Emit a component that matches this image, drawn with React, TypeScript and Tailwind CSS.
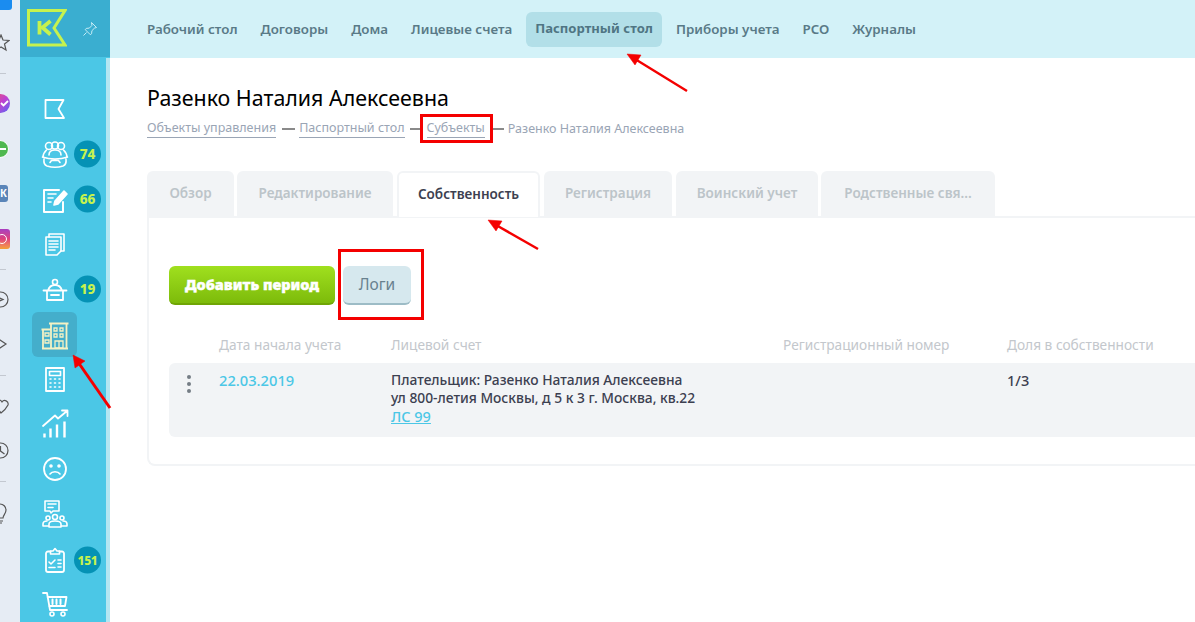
import React from 'react';

const font = "font-['Noto_Sans','Open_Sans',sans-serif]";

const navItems = ['Рабочий стол', 'Договоры', 'Дома', 'Лицевые счета', 'Паспортный стол', 'Приборы учета', 'РСО', 'Журналы'];
const tabs = [
  { label: 'Обзор', w: 'w-[87px] ml-0' },
  { label: 'Редактирование', w: 'w-[156px] ml-[3px]' },
  { label: 'Собственность', w: 'w-[143px] ml-[4px]', active: true },
  { label: 'Регистрация', w: 'w-[128px] ml-[4px]' },
  { label: 'Воинский учет', w: 'w-[142px] ml-[4px]' },
  { label: 'Родственные свя...', w: 'w-[174px] ml-[3px]' },
];

const Badge = ({ value }: { value: string }) => (
  <div
    className={`absolute left-[54px] top-[calc(50%-1px)] -translate-y-1/2 w-[27px] h-[27px] rounded-full bg-[#0592b5] text-[#c6f24e] font-extrabold flex items-center justify-center ${
      value.length > 2 ? 'text-[12px] tracking-tight' : 'text-[13.5px]'
    }`}
  >
    {value}
  </div>
);

const Icon = ({ children }: { children: React.ReactNode }) => (
  <svg width="30" height="30" viewBox="0 0 30 30" fill="none" stroke="#fff" strokeWidth="1.6" strokeLinejoin="round" strokeLinecap="round">
    {children}
  </svg>
);

const SideItem = ({ h, badge, children, active }: { h: string; badge?: string; children: React.ReactNode; active?: boolean }) => (
  <div className={`relative flex items-center w-[86px] pl-[12px] ${h}`}>
    <div className={`w-[45px] h-[45px] shrink-0 rounded-md flex items-center justify-center ${active ? 'bg-[#44aecb]' : ''}`}>{children}</div>
    {badge && <Badge value={badge} />}
  </div>
);

export default function App() {
  return (
    <div className={`relative flex w-[1195px] h-[622px] overflow-hidden bg-white ${font}`}>
      {/* browser side strip */}
      <div className="w-[20px] shrink-0 bg-[#e6ecf4] relative overflow-hidden">
        <div className="absolute left-[-6px] top-[-8px] w-[18px] h-[18px] rounded-[3px] bg-[#1a8cf0]" />
        <svg className="absolute left-[-7px] top-[34px]" width="17" height="18" viewBox="0 0 17 18" fill="none" stroke="#555" strokeWidth="1.2">
          <path d="M8 1l2 5 6 .5-4.500 3.500 1.500 6-5-3-5 3 1.500-6L0 6.500 6 6z" />
        </svg>
        <div className="absolute left-0 top-[73px] w-[6px] h-px bg-[#c3c8d0]" />
        <div className="absolute left-[-9px] top-[94px] w-[19px] h-[19px] rounded-full bg-gradient-to-br from-[#f0485f] via-[#c040d0] to-[#4a5cf5]" />
        <svg className="absolute left-0 top-[99px]" width="9" height="9" viewBox="0 0 9 9" fill="none" stroke="#fff" strokeWidth="1.800">
          <path d="M1 4l2.500 2.500L8 2" />
        </svg>
        <div className="absolute left-[-9px] top-[140px] w-[18px] h-[18px] rounded-full bg-[#4fb84f] border border-white" />
        <div className="absolute left-0 top-[148px] w-[6px] h-[2px] bg-white" />
        <div className="absolute left-[-6px] top-[185px] w-[14px] h-[17px] rounded-[3px] bg-[#5a85b8] text-white text-[10px] font-bold leading-[17px] text-right pr-[1px]">К</div>
        <div className="absolute left-[-4px] top-[229px] w-[14px] h-[20px] rounded-[3px] bg-gradient-to-b from-[#a83cc0] via-[#e0407a] to-[#f5a030]" />
        <div className="absolute left-[-3px] top-[234px] w-[10px] h-[10px] rounded-full border border-white" />
        <div className="absolute left-0 top-[269px] w-[6px] h-px bg-[#c3c8d0]" />
        <svg className="absolute left-[-8px] top-[291px]" width="17" height="17" viewBox="0 0 17 17" fill="none" stroke="#555" strokeWidth="1.200">
          <circle cx="8.500" cy="8.500" r="7.500" /><path d="M5 6l6 2.500-6 2.500" />
        </svg>
        <svg className="absolute left-[-4px] top-[337px]" width="12" height="14" viewBox="0 0 12 14" fill="none" stroke="#555" strokeWidth="1.200">
          <path d="M1 1l9 6-9 6" />
        </svg>
        <div className="absolute left-0 top-[375px] w-[6px] h-px bg-[#c3c8d0]" />
        <svg className="absolute left-[-6px] top-[397px]" width="15" height="18" viewBox="0 0 15 18" fill="none" stroke="#555" strokeWidth="1.200">
          <path d="M7 16L2 10C-1 5 5 0 8 5c2-3 7-1 6 3-1 2-3 5-7 8z" />
        </svg>
        <svg className="absolute left-[-8px] top-[442px]" width="17" height="17" viewBox="0 0 17 17" fill="none" stroke="#555" strokeWidth="1.200">
          <circle cx="8.500" cy="8.500" r="7.500" /><path d="M8.500 4v5l4 3" />
        </svg>
        <div className="absolute left-0 top-[481px] w-[6px] h-px bg-[#c3c8d0]" />
        <svg className="absolute left-[-7px] top-[503px]" width="15" height="22" viewBox="0 0 15 22" fill="none" stroke="#555" strokeWidth="1.200">
          <path d="M4 15c0-3-3-4-3-8a6 6 0 0 1 12 0c0 4-3 5-3 8zM4 18h6M5 20h4" />
        </svg>
      </div>

      {/* sidebar */}
      <div className="w-[90px] shrink-0 flex flex-col bg-[#4bc7e6] relative">
        <div className="h-[58px] bg-[#3aaed0] flex items-center relative">
          <svg className="ml-[7px] mt-[-1px]" width="40" height="38" viewBox="0 0 40 38" fill="none">
            <path d="M1.500 1.500H38L27 19l11 17H1.500z" stroke="#c6f24e" strokeWidth="3" />
            <path d="M12.500 12v13.500M23.500 12l-8 6.500 8 7" stroke="#c6f24e" strokeWidth="3.800" />
          </svg>
          <svg className="ml-[15px]" width="16" height="16" viewBox="0 0 16 16" fill="none" stroke="#d5f3f9" strokeWidth="0.9">
            <path d="M9.500 1.500l5 5-2 .6-2.600 2.600-.3 3-1.300 1-5-5 1-1.300 3-.3 2.600-2.600zM4.500 11.500l-3 3" />
          </svg>
        </div>
        <div className="absolute right-0 top-[58px] bottom-0 w-[4px] bg-[#b4e6f2]" />
        <div className="pt-[28px] flex flex-col">
          <SideItem h="h-[46px]">
            <Icon><path d="M5.500 7h18l-5 9 5.500 9H5.500z" strokeWidth="1.800" /></Icon>
          </SideItem>
          <SideItem h="h-[48px]" badge="74">
            <Icon>
              <circle cx="9" cy="6" r="3.500" /><circle cx="15" cy="5.500" r="3.500" /><circle cx="21" cy="6" r="3.500" />
              <path d="M3 17c0-3 1.500-5 3.500-7M27 17c0-3-1.500-5-3.500-7M9 15c0-3 2-5 6-5s6 2 6 5" />
              <path d="M2.500 17c4 1.500 8 2 12.500 2s8.500-.5 12.500-2M4 19c-.5 4 0 6 3 7 5 1.500 11 1.500 16 0 3-1 3.500-3 3-7M10 22.500l1.500-2h7l1.500 2" />
            </Icon>
          </SideItem>
          <SideItem h="h-[42px]" badge="66">
            <Icon>
              <path d="M23 17v10H4V5h15" strokeWidth="2" />
              <path d="M8 9h8M8 13h5M8 17h3" />
              <path d="M14 20l1-4 9-10 3 3-9 10z" fill="#fff" />
            </Icon>
          </SideItem>
          <SideItem h="h-[46px]">
            <Icon>
              <path d="M9 8V5h15v17h-3" />
              <path d="M6 8h15v14l-4 4H6z" />
              <path d="M9 12h9M9 15h9M9 18h9M9 21h6" />
            </Icon>
          </SideItem>
          <SideItem h="h-[46px]" badge="19">
            <Icon>
              <circle cx="15" cy="7" r="2.500" />
              <path d="M8 15.500c1-3.500 3-5.500 7-5.500s6 2 7 5.500M3.500 15.500h23M7 15.500V25h16v-9.500M11 20h8" strokeWidth="1.800" />
            </Icon>
          </SideItem>
          <SideItem h="h-[43px]" active>
            <svg width="30" height="30" viewBox="0 0 30 30" fill="none" stroke="#f4f2c4" strokeWidth="1.300">
              <path d="M9 3.500h19.500M11 3.500v25M26.500 3.500v25M1.500 9.500h10M3 9.500v19h8M2 28.500h26" strokeWidth="1.800" />
              <path d="M5 13h4v3H5zM5 20h4v3H5zM14 8h3v3h-3zM20 8h3v3h-3zM14 14h3v3h-3zM20 14h3v3h-3zM15 21h8v7h-8zM19 21v7" />
            </svg>
          </SideItem>
          <SideItem h="h-[46px]">
            <Icon>
              <path d="M6 4h18v23H6z" strokeWidth="1.800" />
              <path d="M9.500 7.500h11v4h-11zM10 15h1M14.500 15h1M19 15h1M10 19h1M14.500 19h1M19 19h1M10 23h1M14.500 23h1M19 23h1" />
            </Icon>
          </SideItem>
          <SideItem h="h-[44px]">
            <Icon>
              <path d="M3 17L15 6.500l3 3L27 2M22 1.500h5.500V7" strokeWidth="1.800" />
              <path d="M4.500 28.500v-4M10.500 28.500v-9M17 28.500v-13M24.500 28.500v-16" strokeWidth="2.400" strokeLinecap="butt" />
            </Icon>
          </SideItem>
          <SideItem h="h-[46px]">
            <Icon>
              <circle cx="15" cy="15" r="11" strokeWidth="1.800" />
              <circle cx="11" cy="12" r="1" fill="#fff" /><circle cx="19" cy="12" r="1" fill="#fff" />
              <path d="M10 20c2-3 8-3 10 0" />
            </Icon>
          </SideItem>
          <SideItem h="h-[44px]">
            <Icon>
              <path d="M5 2h14v10h-6l-2 2-1-2H5z" /><path d="M8 5h8M8 8.500h5" />
              <circle cx="15" cy="18" r="2.500" /><circle cx="8" cy="19" r="2" /><circle cx="22" cy="19" r="2" />
              <path d="M9 28v-3c0-2 3-3 6-3s6 1 6 3v3zM3 27v-2c0-2 2-3 4-3M27 27v-2c0-2-2-3-4-3M3 27h6M21 27h6" />
            </Icon>
          </SideItem>
          <SideItem h="h-[50px]" badge="151">
            <Icon>
              <path d="M10.500 5.500H8a2 2 0 0 0-2 2V24a2 2 0 0 0 2 2h14a2 2 0 0 0 2-2V7.500a2 2 0 0 0-2-2h-2.500" strokeWidth="1.800" />
              <path d="M10.500 8h9V5h-2.500L15 2.500 13 5h-2.500zM9 16l2 2 4-4M18 14h3M18 17.500h3M18 21h3M9 21.500h6" />
            </Icon>
          </SideItem>
          <SideItem h="h-[36px]">
            <Icon>
              <path d="M3 4h4l3 17h17M7.500 8h19l-1.500 9H9" strokeWidth="1.800" />
              <path d="M12.500 10.500v4.500M16.500 10.500v4.500M20.500 10.500v4.500" strokeWidth="2" />
              <circle cx="12" cy="25" r="2" /><circle cx="23" cy="25" r="2" />
            </Icon>
          </SideItem>
        </div>
      </div>

      {/* main */}
      <div className="flex-1 min-w-0 flex flex-col">
        <div className="h-[58px] shrink-0 bg-[#d3f2f8] flex items-center pl-[28px] gap-[5px]">
          {navItems.map((item) => (
            <div
              key={item}
              className={`h-[35px] px-[9px] flex items-center rounded-md whitespace-nowrap ${
                item === 'Паспортный стол' ? 'text-[13.1px] bg-[#b2dfe8] font-bold text-[#4f7583]' : 'text-[13.35px] font-semibold text-[#597a87]'
              }`}
            >
              {item}
            </div>
          ))}
        </div>

        <div className="pl-[37px] pt-[28px]">
          <h1 className="text-[21.4px] leading-[24px] text-black">Разенко Наталия Алексеевна</h1>
          <div className="mt-[9px] flex items-center text-[12.5px] leading-[18px] text-[#9aa5b5] whitespace-nowrap">
            <span className="border-b border-[#9aa5b5]">Объекты управления</span>
            <span className="ml-[6px] mr-[4px] w-[13px] h-[2px] bg-[#8a8a8a]" />
            <span className="border-b border-[#9aa5b5]">Паспортный стол</span>
            <span className="ml-[5px] mr-[6px] w-[11px] h-[2px] bg-[#8a8a8a]" />
            <span className="border-b border-[#9aa5b5] relative">
              Субъекты
              <span className="absolute left-[-7px] top-[-5px] w-[73px] h-[29px] border-[3px] border-[#f40000]" />
            </span>
            <span className="ml-[7px] mr-[4px] w-[12px] h-[2px] bg-[#8a8a8a]" />
            <span>Разенко Наталия Алексеевна</span>
          </div>

          <div className="mt-[33px] flex h-[46px] relative z-10">
            {tabs.map((tab) => (
              <div
                key={tab.label}
                className={`pb-[2px] rounded-t-md flex items-center justify-center text-[13.5px] font-semibold ${tab.w} ${
                  tab.active ? 'bg-white border-2 border-b-0 border-[#f2f4f6] text-[#3c4050]' : 'bg-[#f2f4f6] text-[#bcc4c9]'
                }`}
              >
                {tab.label}
              </div>
            ))}
          </div>

          <div className="h-[250px] -mt-[1px] rounded-bl-lg border-2 border-r-0 border-[#f2f4f6] pl-[20px] pt-[48px]">
            <div className="flex items-start gap-[8px]">
              <div className="w-[166px] h-[39px] rounded-md bg-gradient-to-b from-[#a0e01e] to-[#7dbb0a] border-b-[2px] border-[#6fa505] flex items-center justify-center text-white text-[14.5px] font-black [-webkit-text-stroke:0.4px_white]">Добавить период</div>
              <div className="relative w-[68px] h-[39px] rounded-md bg-[#d6e8ee] border-b-[2px] border-[#9dbcc6] flex items-center justify-center text-[15.5px] text-[#68818e]">
                Логи
                <span className="absolute left-[-5px] top-[-17px] w-[86px] h-[71px] border-[3px] border-[#f40000]" />
              </div>
            </div>

            <div className="mt-[31px] flex h-[27px] items-start text-[13.7px] leading-[18px] text-[#c3c7cc] whitespace-nowrap">
              <div className="w-[50px]" />
              <div className="w-[172px]">Дата начала учета</div>
              <div className="w-[392px]">Лицевой счет</div>
              <div className="w-[224px]">Регистрационный номер</div>
              <div>Доля в собственности</div>
            </div>

            <div className="h-[74px] rounded-l-md bg-[#f2f4f6] flex text-[13.8px] leading-[18px] pt-[8px] whitespace-nowrap">
              <div className="w-[50px] pl-[18px] pt-[4px] flex flex-col gap-[3px]">
                <span className="w-[4px] h-[4px] rounded-full bg-[#757d85]" />
                <span className="w-[4px] h-[4px] rounded-full bg-[#757d85]" />
                <span className="w-[4px] h-[4px] rounded-full bg-[#757d85]" />
              </div>
              <div className="w-[172px] text-[14.7px] text-[#4bc7e6] font-medium">22.03.2019</div>
              <div className="w-[616px] font-medium text-[#3c4050]">
                <div>Плательщик: Разенко Наталия Алексеевна</div>
                <div>ул 800-летия Москвы, д 5 к 3 г. Москва, кв.22</div>
                <div className="text-[14.5px] text-[#4bc7e6] underline">ЛС 99</div>
              </div>
              <div className="text-[14.5px] font-medium text-[#3c4050]">1/3</div>
            </div>
          </div>
        </div>
      </div>

      {/* annotation arrows */}
      <svg className="absolute left-0 top-0 pointer-events-none z-20" width="1195" height="622" viewBox="0 0 1195 622" fill="#f40000" stroke="#f40000">
        <path d="M687 91L635 59" strokeWidth="2.500" fill="none" />
        <path d="M627 54l14 1-6 10z" strokeWidth="0.5" />
        <path d="M538 249L496 225" strokeWidth="2.500" fill="none" />
        <path d="M488 220l14 1-6 10z" strokeWidth="0.5" />
        <path d="M110 408L78 362" strokeWidth="3" fill="none" />
        <path d="M73 355l12 6-10 7z" strokeWidth="0.5" />
      </svg>
    </div>
  );
}
